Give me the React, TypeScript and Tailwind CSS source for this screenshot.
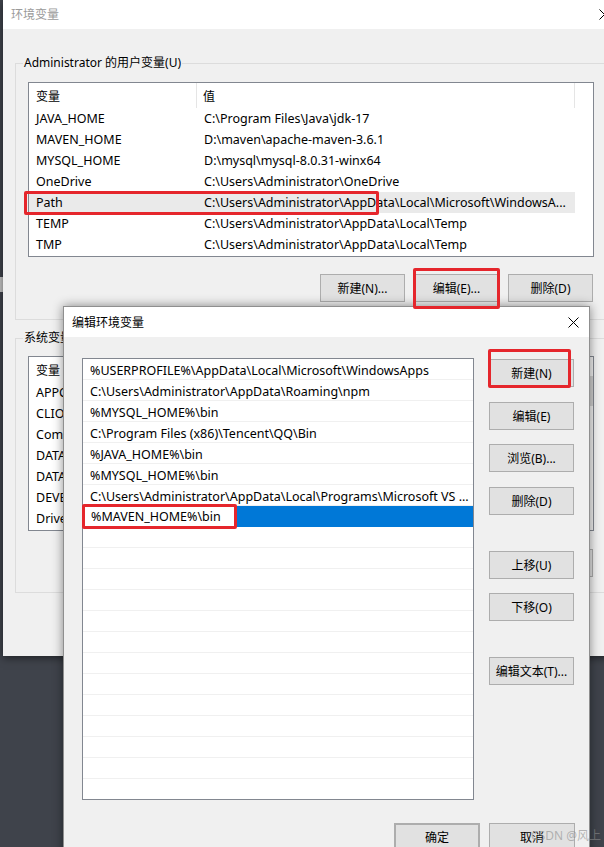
import React from "react";

const userRows: [string, string][] = [
  ["JAVA_HOME", "C:\\Program Files\\Java\\jdk-17"],
  ["MAVEN_HOME", "D:\\maven\\apache-maven-3.6.1"],
  ["MYSQL_HOME", "D:\\mysql\\mysql-8.0.31-winx64"],
  ["OneDrive", "C:\\Users\\Administrator\\OneDrive"],
  ["Path", "C:\\Users\\Administrator\\AppData\\Local\\Microsoft\\WindowsA..."],
  ["TEMP", "C:\\Users\\Administrator\\AppData\\Local\\Temp"],
  ["TMP", "C:\\Users\\Administrator\\AppData\\Local\\Temp"],
];

const sysRows: [string, string][] = [
  ["APPCODE_VM_OPTIONS", "C:\\jetbra\\vmoptions\\appcode.vmoptions"],
  ["CLION_VM_OPTIONS", "C:\\jetbra\\vmoptions\\clion.vmoptions"],
  ["ComSpec", "C:\\Windows\\system32\\cmd.exe"],
  ["DATAGRIP_VM_OPTIONS", "C:\\jetbra\\vmoptions\\datagrip.vmoptions"],
  ["DATASPELL_VM_OPTIONS", "C:\\jetbra\\vmoptions\\dataspell.vmoptions"],
  ["DEVECOSTUDIO_VM_OPTIONS", "C:\\jetbra\\vmoptions\\devecostudio.vmoptions"],
  ["DriverData", "C:\\Windows\\System32\\Drivers\\DriverData"],
];

const pathRows = [
  "%USERPROFILE%\\AppData\\Local\\Microsoft\\WindowsApps",
  "C:\\Users\\Administrator\\AppData\\Roaming\\npm",
  "%MYSQL_HOME%\\bin",
  "C:\\Program Files (x86)\\Tencent\\QQ\\Bin",
  "%JAVA_HOME%\\bin",
  "%MYSQL_HOME%\\bin",
  "C:\\Users\\Administrator\\AppData\\Local\\Programs\\Microsoft VS ...",
];

function Btn({
  children,
  className = "",
}: {
  children: React.ReactNode;
  className?: string;
}) {
  return (
    <div
      className={
        "flex shrink-0 items-center justify-center border border-[#adadad] bg-[#e1e1e1] pt-[1px] text-[12px] leading-none text-black " +
        className
      }
    >
      {children}
    </div>
  );
}

function CloseX({ className = "" }: { className?: string }) {
  return (
    <svg
      className={className}
      width="11"
      height="11"
      viewBox="0 0 11 11"
      fill="none"
      stroke="#000"
      strokeWidth="1"
    >
      <path d="M0.5 0.5 L10.5 10.5 M10.5 0.5 L0.5 10.5" />
    </svg>
  );
}

function ListView({
  rows,
  highlight,
  scrollbar,
}: {
  rows: [string, string][];
  highlight?: number;
  scrollbar?: boolean;
}) {
  return (
    <div className="relative h-[175px] w-[566px] overflow-hidden border border-[#828790] bg-white">
      <div className="flex h-[25px] w-[546px] text-[12px] leading-none">
        <div className="flex h-full w-[168px] shrink-0 items-center border-r border-[#e5e5e5] pl-[7px] pt-[3px]">
          变量
        </div>
        <div className="flex h-full w-[378px] shrink-0 items-center border-r border-[#e5e5e5] pl-[6px] pt-[3px]">
          值
        </div>
      </div>
      {rows.map(([k, v], i) => (
        <div
          key={i}
          className={
            "flex h-[21px] w-[546px] items-center pt-[2px] text-[12.5px] leading-none " +
            (i === highlight ? "bg-[#eaeaea]" : "")
          }
        >
          <div className="w-[168px] shrink-0 overflow-hidden whitespace-nowrap pl-[7px]">
            {k}
          </div>
          <div className="w-[378px] shrink-0 overflow-hidden whitespace-nowrap pl-[7px]">
            {v}
          </div>
        </div>
      ))}
      {scrollbar && (
        <div className="absolute right-0 top-0 flex h-full w-[17px] flex-col bg-[#f0f0f0]">
          <div className="mt-[19px] h-[30px] w-full bg-[#d0d0d0]" />
        </div>
      )}
    </div>
  );
}

export default function App() {
  return (
    <div className="relative h-[847px] w-[604px] overflow-hidden bg-[#3f434b] font-['Noto_Sans','Noto_Sans_CJK_SC',sans-serif] text-black">
      {/* desktop edge detail */}
      <div className="absolute left-0 top-[277px] h-[15px] w-[3px] bg-[#c4c4c4]" />

      {/* back window: 环境变量 */}
      <div className="absolute left-[3px] top-0 flex h-[656px] w-[640px] flex-col bg-[#f0f0f0] shadow-[0_2px_8px_rgba(0,0,0,0.5)]">
        <div className="relative flex h-[29px] shrink-0 items-center bg-white pl-[8px]">
          <span className="text-[12px] leading-none text-[#9a9a9a]">环境变量</span>
          <CloseX className="absolute left-[596px] top-[9px]" />
        </div>

        <fieldset className="ml-[12px] mt-[26px] w-[640px] border border-[#dcdcdc] pb-[17px]">
          <legend className="ml-[7px] px-[1px] text-[12px] leading-[16px]">
            Administrator 的用户变量(U)
          </legend>
          <div className="ml-[12px] mt-[11px] flex w-[566px] flex-col">
            <ListView rows={userRows} highlight={4} />
            <div className="mt-[17px] flex h-[28px] w-[565px] justify-end gap-[9px]">
              <Btn className="h-[28px] w-[85px]">新建(N)...</Btn>
              <Btn className="h-[28px] w-[85px]">编辑(E)...</Btn>
              <Btn className="h-[28px] w-[85px]">删除(D)</Btn>
            </div>
          </div>
        </fieldset>

        <fieldset className="ml-[12px] mt-[10px] w-[640px] border border-[#dcdcdc] pb-[15px]">
          <legend className="ml-[7px] px-[1px] text-[12px] leading-[16px]">
            系统变量(S)
          </legend>
          <div className="ml-[12px] mt-[10px] flex w-[566px] flex-col">
            <ListView rows={sysRows} scrollbar />
            <div className="mt-[18px] flex h-[28px] w-[565px] justify-end gap-[9px]">
              <Btn className="h-[28px] w-[85px]">新建(W)...</Btn>
              <Btn className="h-[28px] w-[85px]">编辑(I)...</Btn>
              <Btn className="h-[28px] w-[85px]">删除(L)</Btn>
            </div>
          </div>
        </fieldset>
      </div>

      {/* dialog: 编辑环境变量 */}
      <div className="absolute left-[63px] top-[306px] flex h-[580px] w-[527px] flex-col border border-[#8f8f8f] bg-[#f0f0f0] shadow-[0_0_10px_rgba(0,0,0,0.45)]">
        <div className="relative flex h-[30px] shrink-0 items-center bg-white pl-[8px] pt-[1px]">
          <span className="text-[12px] leading-none">编辑环境变量</span>
          <CloseX className="absolute left-[504px] top-[10px]" />
        </div>

        <div className="flex pl-[18px] pt-[21px]">
          <div className="flex h-[442px] w-[392px] shrink-0 flex-col overflow-hidden border border-[#828790] bg-white">
            {pathRows.map((p, i) => (
              <div
                key={i}
                className="flex h-[21px] shrink-0 items-center overflow-hidden whitespace-nowrap border-b border-[#f0f0f0] pl-[7px] pt-[5px] text-[12.5px] leading-none"
              >
                {p}
              </div>
            ))}
            <div className="flex h-[21px] shrink-0 items-stretch bg-[#0078d7]">
              <div className="flex w-[152px] items-center whitespace-nowrap border border-[#0078d7] bg-white pl-[7px] pt-[2px] text-[12.5px] leading-none">
                %MAVEN_HOME%\bin
              </div>
            </div>
            {Array.from({ length: 14 }).map((_, i) => (
              <div key={i} className="h-[21px] shrink-0 border-b border-[#f0f0f0]" />
            ))}
          </div>

          <div className="ml-[15px] flex w-[85px] flex-col">
            <Btn className="mt-[1px] h-[28px] w-[85px]">新建(N)</Btn>
            <Btn className="mt-[15px] h-[28px] w-[85px]">编辑(E)</Btn>
            <Btn className="mt-[14px] h-[28px] w-[85px]">浏览(B)...</Btn>
            <Btn className="mt-[15px] h-[28px] w-[85px]">删除(D)</Btn>
            <Btn className="mt-[36px] h-[28px] w-[85px]">上移(U)</Btn>
            <Btn className="mt-[14px] h-[28px] w-[85px]">下移(O)</Btn>
            <Btn className="mt-[36px] h-[28px] w-[85px]">编辑文本(T)...</Btn>
          </div>
        </div>

        <div className="mt-[23px] flex justify-end gap-[9px] pr-[14px]">
          <Btn className="h-[28px] w-[86px] border-2 border-[#0078d7]">确定</Btn>
          <Btn className="h-[28px] w-[86px]">取消</Btn>
        </div>
      </div>

      {/* red annotation boxes */}
      <div className="absolute left-[24px] top-[191px] h-[24px] w-[355px] rounded-[2px] border-[3px] border-[#e5262c]" />
      <div className="absolute left-[413px] top-[268px] h-[41px] w-[87px] rounded-[2px] border-[3px] border-[#e5262c]" />
      <div className="absolute left-[488px] top-[349px] h-[39px] w-[83px] rounded-[2px] border-[3px] border-[#e5262c]" />
      <div className="absolute left-[82px] top-[504px] h-[25px] w-[155px] rounded-[2px] border-[3px] border-[#e5262c]" />

      {/* watermark */}
      <div className="absolute left-[531px] top-[828px] whitespace-nowrap text-[12px] leading-[16px] text-[rgba(140,140,140,0.6)]">
        CSDN @风上
      </div>
    </div>
  );
}
